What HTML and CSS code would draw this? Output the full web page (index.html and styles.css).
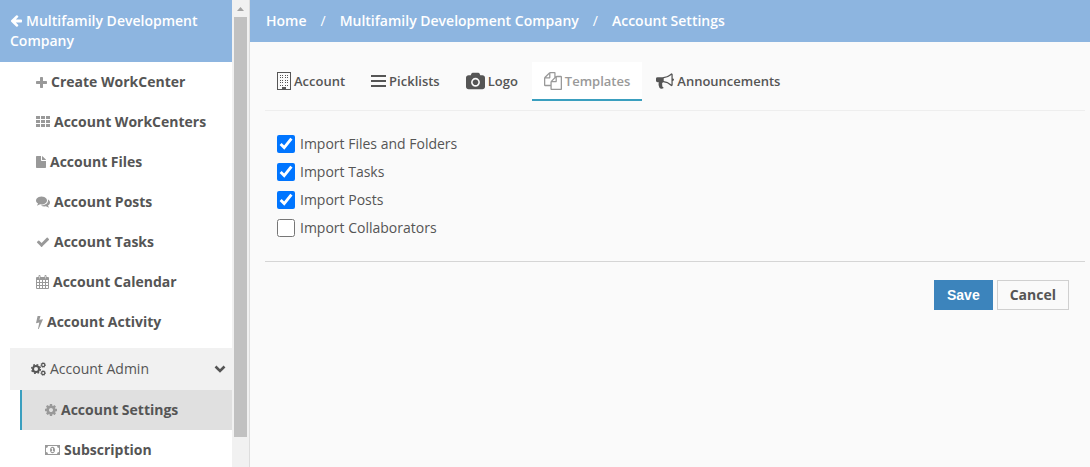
FILE: index.html
```html
<!DOCTYPE html>
<html lang="en">
<head>
<meta charset="utf-8">
<title>Account Settings</title>
<link rel="stylesheet" href="styles.css">
</head>
<body>
<div class="app">
  <aside class="sidebar">
    <div class="sidebar-scroll">
      <a class="sidebar-title" href="#"><svg class="icon back" viewBox="64 160 1600 1600"><path d="M1664 896v128q0 53-32.500 90.500t-84.500 37.500h-704l293 294q38 36 38 90t-38 90l-75 76q-37 37-90 37-52 0-91-37l-651-652q-37-37-37-90 0-52 37-91l651-650q38-38 91-38 52 0 90 38l75 74q38 38 38 91t-38 91l-293 293h704q52 0 84.500 37.500t32.500 90.500z"/></svg>Multifamily Development Company</a>
      <nav class="menu">
        <a class="item" href="#"><svg class="icon w11" viewBox="192 128 1408 1408"><path d="M1600 736v192q0 40-28 68t-68 28h-416v416q0 40-28 68t-68 28h-192q-40 0-68-28t-28-68v-416h-416q-40 0-68-28t-28-68v-192q0-40 28-68t68-28h416v-416q0-40 28-68t68-28h192q40 0 68 28t28 68v416h416q40 0 68 28t28 68z"/></svg>Create WorkCenter</a>
        <a class="item" href="#"><svg class="icon w14" viewBox="0 0 14 12"><path d="M0 0h4v3H0zM5 0h4v3H5zM10 0h4v3h-4zM0 4h4v3H0zM5 4h4v3H5zM10 4h4v3h-4zM0 8h4v3H0zM5 8h4v3H5zM10 8h4v3h-4z"/></svg>Account WorkCenters</a>
        <a class="item" href="#"><svg class="icon w10" viewBox="0 0 10 12"><path d="M0 .7Q0 0 .7 0H5v4.300q0 .7.700.7H10v6.300q0 .7-.7.700H.7Q0 12 0 11.300zM6 0q.4.100.7.400l2.900 2.900q.3.300.4.700H6z"/></svg>Account Files</a>
        <a class="item" href="#"><svg class="icon w14" viewBox="0 200 1792 1500"><path d="M1408 768q0 139-94 257t-256.500 186.500-353.500 68.500q-86 0-176-16-124 88-278 128-36 9-86 16h-3q-11 0-20.500-8t-11.500-21q-1-3-1-6.500t.5-6.500 2-6l2.500-5 3.500-5.500 4-5 4.500-5 4-4.500q5-6 23-25t26-29.500 22.500-29 25-38.500 20.500-44q-124-72-195-177t-71-224q0-139 94-257t256.500-186.500 353.500-68.500 353.500 68.500 256.500 186.500 94 257zm384 256q0 120-71 224.500t-195 176.500q10 24 20.500 44t25 38.500 22.500 29 26 29.500 23 25q1 1 4 4.500t4.500 5 4 5 3.500 5.500l2.500 5 2 6 .5 6.500-1 6.500q-3 14-13 22t-22 7q-50-7-86-16-154-40-278-128-90 16-176 16-271 0-472-132 58 4 88 4 161 0 309-45t264-129q125-92 192-212t67-254q0-77-23-152 129 71 204 178t75 230z"/></svg>Account Posts</a>
        <a class="item" href="#"><svg class="icon w14" viewBox="0 128 1792 1536"><path d="M1671 566q0 40-28 68l-724 724-136 136q-28 28-68 28t-68-28l-136-136-362-362q-28-28-28-68t28-68l136-136q28-28 68-28t68 28l294 295 656-657q28-28 68-28t68 28l136 136q28 28 28 68z"/></svg>Account Tasks</a>
        <a class="item" href="#"><svg class="icon w13" viewBox="0 0 13 14"><path fill-rule="evenodd" d="M1 2h1.500V1q0-1 1-1t1 1v1h4V1q0-1 1-1t1 1v1H12q1 0 1 1v10q0 1-1 1H1q-1 0-1-1V3q0-1 1-1zM1 5v2h2V5zM4 5v2h2V5zM7 5v2h2V5zM10 5v2h2V5zM1 8v2h2V8zM4 8v2h2V8zM7 8v2h2V8zM10 8v2h2V8zM1 11v2h2v-2zM4 11v2h2v-2zM7 11v2h2v-2zM10 11v2h2v-2zM3.250 1v2.500h.5V1zM9.250 1v2.500h.5V1z"/></svg>Account Calendar</a>
        <a class="item" href="#"><svg class="icon w7" viewBox="0 0 7 13"><path d="M1.600 0H4.500L3.400 3.800 7 3.200 2.700 13H2L3.300 6.600 0 7.300z"/></svg>Account Activity</a>
      </nav>
      <button class="group" type="button"><svg class="icon w15" viewBox="0 0 15 14"><g fill="none" stroke="currentColor"><circle cx="5" cy="7" r="3" stroke-width="2"/><circle cx="5" cy="7" r="4.400" stroke-width="1.400" stroke-dasharray="1.730 1.730"/><circle cx="12.200" cy="3" r="1.600" stroke-width="1.200"/><circle cx="12.200" cy="3" r="2.400" stroke-width=".8" stroke-dasharray=".94 .94"/><circle cx="12.200" cy="11" r="1.600" stroke-width="1.200"/><circle cx="12.200" cy="11" r="2.400" stroke-width=".8" stroke-dasharray=".94 .94"/></g></svg><span class="group-name">Account Admin</span><svg class="chevron" viewBox="0 0 12 8"><path d="M1.500 1.500L6 6l4.500-4.500" fill="none" stroke="currentColor" stroke-width="2.600"/></svg></button>
      <nav class="submenu">
        <a class="item active" href="#"><svg class="icon w12" viewBox="128 128 1536 1536"><path d="M1152 896q0-106-75-181t-181-75-181 75-75 181 75 181 181 75 181-75 75-181zm512-109v222q0 12-8 23t-20 13l-185 28q-19 54-39 91 35 50 107 138 10 12 10 25t-9 23q-27 37-99 108t-94 71q-12 0-26-9l-138-108q-44 23-91 38-16 136-29 186-7 28-36 28h-222q-14 0-24.500-8.500t-11.500-21.500l-28-184q-49-16-90-37l-141 107q-10 9-25 9-14 0-25-11-126-114-165-168-7-10-7-23 0-12 8-23 15-21 51-66.500t54-70.500q-27-50-41-99l-183-27q-13-2-21-12.500t-8-23.500v-222q0-12 8-23t19-13l186-28q14-46 39-92-40-57-107-138-10-12-10-24 0-10 9-23 26-36 98.500-107.500t94.500-71.500q13 0 26 10l138 107q44-23 91-38 16-136 29-186 7-28 36-28h222q14 0 24.500 8.500t11.500 21.500l28 184q49 16 90 37l142-107q9-9 24-9 13 0 25 10 129 119 165 170 7 8 7 22 0 12-8 23-15 21-51 66.500t-54 70.500q26 50 41 98l183 28q13 2 21 12.500t8 23.500z"/></svg>Account Settings</a>
        <a class="item" href="#"><svg class="icon w15" viewBox="0 0 15 10"><path fill-rule="evenodd" d="M0 0h15v10H0zM3 1q0 2-2 2v4q2 0 2 2h9q0-2 2-2V3q-2 0-2-2zM7.500 1.800C9 1.800 10 3.200 10 5S9 8.200 7.500 8.200 5 6.800 5 5s1-3.200 2.500-3.200zM6.200 3.600l.5.600.4-.3V6.300h-.8V7h2.500v-.7H8V3h-.8z"/></svg>Subscription</a>
      </nav>
    </div>
    <div class="scrollbar" aria-hidden="true"><svg class="scroll-up" viewBox="0 0 13 17"><path d="M3 11l3.500-4 3.500 4z"/></svg><div class="thumb"></div></div>
  </aside>

  <main class="main">
    <nav class="breadcrumb" aria-label="Breadcrumb">
      <a href="#">Home</a><span>/</span><a href="#">Multifamily Development Company</a><span>/</span><a href="#">Account Settings</a>
    </nav>
    <div class="content">
      <nav class="tabs">
        <a class="tab" href="#"><svg class="icon w14" viewBox="0 0 14 18"><path fill-rule="evenodd" d="M0 0h14v18H0zM1 1v16h4v-2h4v2h4V1z"/><path d="M3 3h1v1H3zM5 3h1v1H5zM8 3h1v1H8zM10 3h1v1h-1zM3 5h1v1H3zM5 5h1v1H5zM8 5h1v1H8zM10 5h1v1h-1zM3 8h1v1H3zM5 8h1v1H5zM8 8h1v1H8zM10 8h1v1h-1zM3 10h1v1H3zM5 10h1v1H5zM8 10h1v1H8zM10 10h1v1h-1zM3 13h1v1H3zM5 13h1v1H5zM8 13h1v1H8zM10 13h1v1h-1z"/></svg>Account</a>
        <a class="tab" href="#"><svg class="icon w15" viewBox="0 0 15 12"><path d="M0 0h15v2H0zM0 5h15v2H0zM0 10h15v2H0z"/></svg>Picklists</a>
        <a class="tab" href="#"><svg class="icon w19" viewBox="0 0 1920 1664"><path d="M960 672q119 0 203.500 84.500t84.500 203.500-84.500 203.500-203.500 84.500-203.500-84.500-84.500-203.500 84.500-203.500 203.500-84.500zm704-416q106 0 181 75t75 181v896q0 106-75 181t-181 75h-1408q-106 0-181-75t-75-181v-896q0-106 75-181t181-75h224l51-136q19-49 69.500-84.500t103.500-35.500h512q53 0 103.500 35.500t69.500 84.500l51 136h224zm-704 1152q185 0 316.500-131.500t131.500-316.500-131.500-316.500-316.500-131.500-316.500 131.500-131.500 316.500 131.500 316.500 316.500 131.500z"/></svg>Logo</a>
        <a class="tab current" href="#" aria-current="page"><svg class="icon w18" viewBox="0 0 1792 1792"><path d="M1696 384q40 0 68 28t28 68v1216q0 40-28 68t-68 28h-960q-40 0-68-28t-28-68v-288h-544q-40 0-68-28t-28-68v-672q0-40 20-88t48-76l408-408q28-28 76-48t88-20h416q40 0 68 28t28 68v328q68-40 128-40h416zm-544 213l-299 299h299v-299zm-640-384l-299 299h299v-299zm196 647l316-316v-416h-384v416q0 40-28 68t-68 28h-416v640h512v-256q0-40 20-88t48-76zm956 804v-1152h-384v416q0 40-28 68t-68 28h-416v640h896z"/></svg>Templates</a>
        <a class="tab" href="#"><svg class="icon w18" viewBox="0 0 1792 1792"><path d="M1664 640q53 0 90.500 37.500t37.500 90.500-37.500 90.500-90.500 37.500v384q0 52-38 90t-90 38q-417-347-812-380-58 19-91 66t-31 100.500 40 92.500q-20 33-23 65.500t6 58 33.500 55 48 50 61.500 50.500q-29 58-111.500 83t-168.500 11.500-132-55.500q-7-23-29.500-87.500t-32-94.500-23-89-15-101 3.500-98.500 22-110.500h-122q-66 0-113-47t-47-113v-192q0-66 47-113t113-47h480q435 0 896-384 52 0 90 38t38 90v384zm-128 604v-954q-394 302-768 343v270q377 42 768 341z"/></svg>Announcements</a>
      </nav>
      <form class="form">
        <div class="options">
          <label class="option"><input type="checkbox" checked>Import Files and Folders</label>
          <label class="option"><input type="checkbox" checked>Import Tasks</label>
          <label class="option"><input type="checkbox" checked>Import Posts</label>
          <label class="option"><input type="checkbox">Import Collaborators</label>
        </div>
        <div class="actions">
          <button class="btn save" type="button">Save</button>
          <button class="btn cancel" type="button">Cancel</button>
        </div>
      </form>
    </div>
  </main>
</div>
</body>
</html>
```

FILE: styles.css
```css
* { box-sizing: border-box; }
body {
  margin: 0;
  background: #fafafa;
  color: #555;
  font: 14px/20px "Open Sans", sans-serif;
}
a { color: inherit; text-decoration: none; }
.app { display: flex; height: 100vh; overflow: hidden; }

.sidebar {
  display: flex;
  flex: 0 0 250px;
  background: #fff;
  border-right: 1px solid #ddd;
}
.sidebar-scroll { flex: 1; min-width: 0; overflow: hidden; }
.sidebar-title {
  display: block;
  padding: 11px 10px;
  background: #8db5e0;
  color: #fff;
  font-weight: 600;
}
.icon { flex: none; margin-right: 4px; fill: currentColor; }
.back { width: 12px; height: 12px; vertical-align: -1px; }
.w7 { width: 7px; }
.w10 { width: 10px; }
.w11 { width: 11px; }
.w12 { width: 12px; }
.w13 { width: 13px; }
.w14 { width: 14px; }
.w15 { width: 15px; }
.w18 { width: 18px; }
.w19 { width: 19px; }

.menu { margin-bottom: 6px; }
.item {
  display: flex;
  align-items: center;
  height: 40px;
  padding-left: 36px;
  font-weight: 700;
}
.item .icon { color: #999; }
.group {
  display: flex;
  align-items: center;
  width: calc(100% - 10px);
  height: 42px;
  margin-left: 10px;
  padding: 0 6px 0 21px;
  border: 0;
  background: #f1f1f1;
  color: inherit;
  font: inherit;
  font-weight: 500;
  text-align: left;
}
.group-name { flex: 1; }
.chevron { width: 12px; height: 8px; }
.submenu { margin-left: 20px; }
.submenu .item { padding-left: 25px; }
.submenu .active {
  padding-left: 23px;
  border-left: 2px solid #3a9fbf;
  background: #e0e0e0;
}

.scrollbar { flex: 0 0 17px; padding: 0 2px; background: #f1f1f1; }
.scroll-up { display: block; width: 13px; height: 17px; fill: #a3a3a3; }
.thumb { height: 90%; background: #c1c1c1; }

.main { flex: 1; min-width: 0; }
.breadcrumb {
  display: flex;
  gap: 14px;
  padding: 11px 16px;
  background: #8db5e0;
  color: #fff;
  font-weight: 600;
}
.breadcrumb span { font-weight: 400; }
.content { padding: 20px 5px 0 15px; }
.tabs {
  display: flex;
  gap: 2px;
  padding-bottom: 9px;
  border-bottom: 1px solid #eee;
  font-size: 13px;
  font-weight: 600;
}
.tab {
  display: flex;
  align-items: center;
  height: 39px;
  padding: 0 12px;
  border-bottom: 2px solid transparent;
}
.tab .icon { height: 18px; margin-right: 3px; }
.current { border-color: #3a9fbf; background: #fff; color: #999; }
.options {
  display: flex;
  flex-direction: column;
  align-items: flex-start;
  padding: 19px 12px;
  border-bottom: 1px solid #d5d5d5;
}
.option { display: flex; align-items: center; height: 28px; }
.option input { width: 18px; height: 18px; margin: 0 5px 0 0; }
.actions {
  display: flex;
  justify-content: flex-end;
  gap: 4px;
  padding: 18px 16px;
}
.btn {
  height: 30px;
  padding: 0 12px;
  border: 1px solid #d0d0d0;
  background: transparent;
  color: #555;
  font: 700 14px/20px "Open Sans", sans-serif;
}
.save {
  border-color: #3c84bc;
  background: #3c84bc;
  color: #fff;
  font-family: "Liberation Sans", Arial, sans-serif;
}
```
